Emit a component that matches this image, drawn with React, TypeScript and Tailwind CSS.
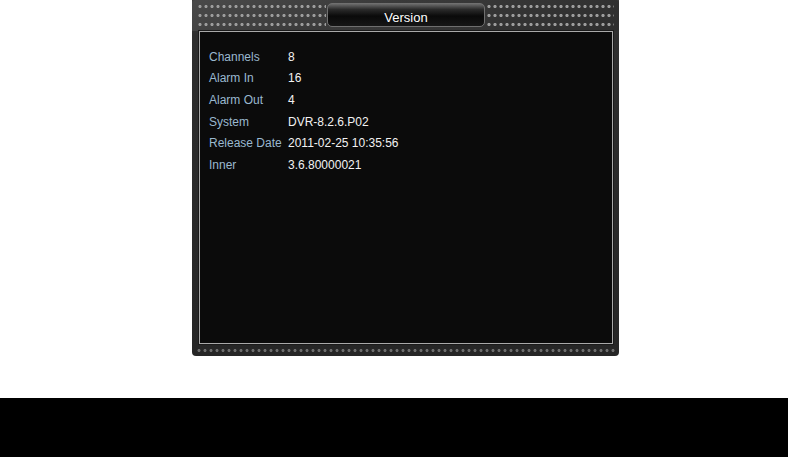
import React from "react";

const rows: [string, string][] = [
  ["Channels", "8"],
  ["Alarm In", "16"],
  ["Alarm Out", "4"],
  ["System", "DVR-8.2.6.P02"],
  ["Release Date", "2011-02-25 10:35:56"],
  ["Inner", "3.6.80000021"],
];

export default function App() {
  return (
    <div className="w-[788px] h-[457px] bg-white flex flex-col" style={{ fontFamily: '"Liberation Sans", Arial, sans-serif' }}>
      <div className="h-[398px] pl-[192px]">
        <div className="w-[427px] h-[356px] flex flex-col rounded-b-[4px] bg-[linear-gradient(180deg,#3d3d3d_0%,#2e2e2e_10%,#262626_100%)]">
          {/* header */}
          <div className="h-[31px] flex items-start bg-[linear-gradient(160deg,#4a4a4a_0%,#3a3a3a_40%,#2e2e2e_100%)] rounded-t-[3px]">
            <div className="mt-[2px] ml-[5px] w-[129px] h-[27px] bg-[radial-gradient(circle,#9c9c9c_1.2px,#6a6a6a_1.6px,transparent_2px)] bg-[length:6px_9px]" />
            <div className="mt-[3px] ml-[1px] w-[158px] h-[24px] rounded-[5px] border border-[#6f6f6f] bg-[linear-gradient(180deg,#6a6a6a_0%,#2a2a2a_25%,#0a0a0a_55%,#161616_100%)] flex items-center justify-center pt-[5px]">
              <span className="text-[13px] text-white leading-none">Version</span>
            </div>
            <div className="mt-[2px] ml-[1px] w-[128px] h-[27px] bg-[radial-gradient(circle,#9c9c9c_1.2px,#6a6a6a_1.6px,transparent_2px)] bg-[length:6px_9px]" />
          </div>
          {/* body */}
          <div className="ml-[7px] mr-[6px] h-[313px] border border-[#a9a9a9] ring-1 ring-[#1a1a1a] bg-[#0b0b0b]">
            <div className="pt-[14px] pl-[9px] flex flex-col">
              {rows.map(([k, v]) => (
                <div key={k} className="h-[21.6px] flex items-center text-[12px]">
                  <span className="w-[79px] text-[#9ab8cf]">{k}</span>
                  <span className="text-[#f2f2f2]">{v}</span>
                </div>
              ))}
            </div>
          </div>
          {/* bottom strip */}
          <div className="mt-[1px] mx-[4px] h-[11px] bg-[radial-gradient(circle,#6e6e6e_1.1px,#4a4a4a_1.5px,transparent_1.9px)] bg-[length:6px_11px]" />
        </div>
      </div>
      <div className="flex-1 bg-black" />
    </div>
  );
}
